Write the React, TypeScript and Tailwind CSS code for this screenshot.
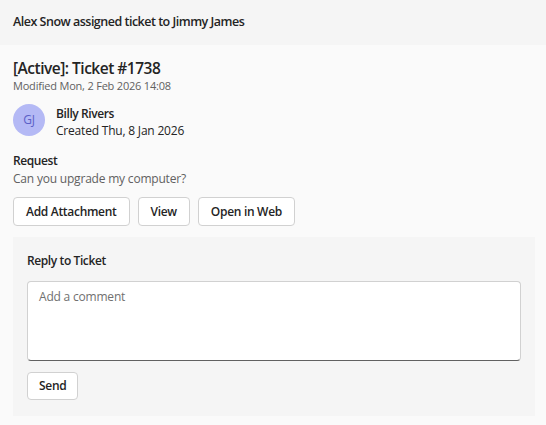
import React from "react";

export default function App() {
  const font = { fontFamily: '"Segoe UI", "Open Sans", "Noto Sans", sans-serif' };
  return (
    <div className="w-[546px] h-[425px] bg-[#fafafa] text-[#242424] overflow-hidden tracking-[-0.2px]" style={font}>
      <div className="h-[45px] bg-[#f5f5f5] flex items-center px-[13px] text-[12.5px] font-semibold tracking-[-0.5px]">
        Alex Snow assigned ticket to Jimmy James
      </div>
      <div className="px-[13px] pt-[12px]">
        <div className="text-[15.5px] font-semibold leading-[22px] tracking-[-0.5px]">[Active]: Ticket #1738</div>
        <div className="text-[11px] text-[#616161] leading-[14px]">Modified Mon, 2 Feb 2026 14:08</div>
        <div className="flex items-start gap-[11px] mt-[11px]">
          <div className="w-[32px] h-[32px] rounded-full bg-[#b4b9f5] text-[#5b5fc7] text-[12px] flex items-center justify-center">
            GJ
          </div>
          <div className="text-[12px] leading-[17px] mt-[1px]">
            <div className="font-semibold tracking-[-0.4px]">Billy Rivers</div>
            <div>Created Thu, 8 Jan 2026</div>
          </div>
        </div>
        <div className="mt-[13px] text-[12px] leading-[18px]">
          <div className="font-semibold tracking-[-0.4px]">Request</div>
          <div className="text-[#616161]">Can you upgrade my computer?</div>
        </div>
        <div className="flex gap-[8px] mt-[9px]">
          {["Add Attachment", "View", "Open in Web"].map((t) => (
            <button
              key={t}
              className="h-[29px] px-[12px] bg-white border border-[#d1d1d1] rounded-[4px] text-[12px] font-semibold tracking-[-0.3px] text-[#242424]"
            >
              {t}
            </button>
          ))}
        </div>
        <div className="mt-[11px] bg-[#f5f5f5] w-[522px] h-[179px] px-[14px] pt-[15px]">
          <div className="text-[12px] font-semibold tracking-[-0.4px] leading-[17px]">Reply to Ticket</div>
          <div className="mt-[12px] h-[80px] bg-white border border-[#d1d1d1] border-b-[#616161] rounded-[4px] px-[11px] pt-[6px] text-[12px] text-[#707070]">
            Add a comment
          </div>
          <button className="mt-[11px] h-[28px] px-[11px] bg-white border border-[#d1d1d1] rounded-[4px] text-[12px] font-semibold tracking-[-0.3px] text-[#242424]">
            Send
          </button>
        </div>
      </div>
    </div>
  );
}
